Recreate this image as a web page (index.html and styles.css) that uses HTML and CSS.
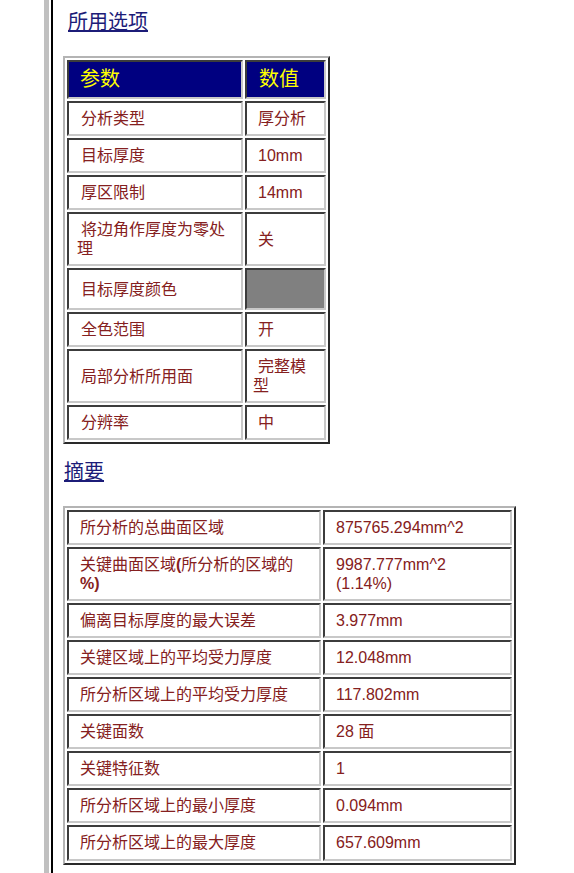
FILE: index.html
```html
<!DOCTYPE html>
<html lang="zh">
<head>
<meta charset="utf-8">
<title>厚度分析报告</title>
<link rel="stylesheet" href="styles.css">
</head>
<body>
<div class="shell">
  <div class="edge"></div>
  <main class="content">
    <h2 class="section-title title-options"><a href="#">所用选项</a></h2>
    <table class="grid options">
      <tr class="head">
        <th class="c1">参数</th>
        <th class="c2">数值</th>
      </tr>
      <tr><td class="c1">分析类型</td><td class="c2">厚分析</td></tr>
      <tr><td class="c1">目标厚度</td><td class="c2">10mm</td></tr>
      <tr><td class="c1">厚区限制</td><td class="c2">14mm</td></tr>
      <tr><td class="c1">将边角作厚度为零处理</td><td class="c2">关</td></tr>
      <tr class="color-row"><td class="c1">目标厚度颜色</td><td class="c2 swatch"></td></tr>
      <tr><td class="c1">全色范围</td><td class="c2">开</td></tr>
      <tr><td class="c1">局部分析所用面</td><td class="c2">完整模型</td></tr>
      <tr class="last"><td class="c1">分辨率</td><td class="c2">中</td></tr>
    </table>

    <h2 class="section-title title-summary"><a href="#">摘要</a></h2>
    <table class="grid summary">
      <tr><td class="c1">所分析的总曲面区域</td><td class="c2">875765.294mm^2</td></tr>
      <tr><td class="c1">关键曲面区域<b>(</b>所分析的区域的<br><b>%)</b></td><td class="c2">9987.777mm^2 (1.14%)</td></tr>
      <tr><td class="c1">偏离目标厚度的最大误差</td><td class="c2">3.977mm</td></tr>
      <tr><td class="c1">关键区域上的平均受力厚度</td><td class="c2">12.048mm</td></tr>
      <tr><td class="c1">所分析区域上的平均受力厚度</td><td class="c2">117.802mm</td></tr>
      <tr><td class="c1">关键面数</td><td class="c2">28 面</td></tr>
      <tr><td class="c1">关键特征数</td><td class="c2">1</td></tr>
      <tr><td class="c1">所分析区域上的最小厚度</td><td class="c2">0.094mm</td></tr>
      <tr class="last"><td class="c1">所分析区域上的最大厚度</td><td class="c2">657.609mm</td></tr>
    </table>
  </main>
</div>
</body>
</html>
```

FILE: styles.css
```css
html, body {
  margin: 0;
  padding: 0;
  background: #ffffff;
}

body {
  font-family: "Liberation Sans", "Noto Sans CJK SC", sans-serif;
  color: #852020;
}

.shell {
  display: flex;
  align-items: stretch;
  min-height: 873px;
}

.edge {
  flex: 0 0 auto;
  margin-left: 44px;
  width: 2px;
  border-left: 5px solid #c0c0c0;
  border-right: 2px solid #000000;
}

.content {
  flex: 1 1 auto;
  padding-left: 10px;
}

.section-title {
  font-size: 20px;
  line-height: 24px;
  font-weight: normal;
  margin: 0;
}

.section-title a {
  color: #1c1c78;
  text-decoration: underline;
}

.title-options {
  margin: 10px 0 22px 5px;
}

.title-summary {
  margin: 16px 0 22px 1px;
}

.grid {
  border-collapse: separate;
  border-spacing: 2px;
  border-style: solid;
  border-width: 2px;
  border-color: #b4b4b4 #2a2a2a #2a2a2a #b4b4b4;
  table-layout: fixed;
  font-size: 16px;
  line-height: 19px;
}

.grid td,
.grid th {
  box-sizing: border-box;
  border-style: solid;
  border-width: 2px;
  border-color: #3c3c3c #c8c8c8 #c8c8c8 #3c3c3c;
  padding: 6px 6px 6px 8px;
  vertical-align: middle;
  text-align: left;
  font-weight: normal;
}

.grid b {
  font-weight: bold;
}

/* options table */
.options {
  width: 267px;
}

.options .c1 {
  width: 176px;
  text-indent: 4px;
}

.options td.c2 {
  padding-left: 6px;
  text-indent: 5px;
}

.options .head th {
  background: #000080;
  color: #ffff00;
  font-size: 20px;
  line-height: 23px;
  padding: 6px 6px 6px 11px;
  text-indent: 0;
}

.options .head th.c2 {
  padding-left: 12px;
}

.options .color-row td {
  padding-top: 10px;
  padding-bottom: 9px;
}

.options .swatch {
  background: #808080;
}

.options .last td {
  padding-bottom: 6px;
}

/* summary table */
.summary {
  width: 453px;
}

.summary .c1 {
  width: 254px;
}

.summary td {
  padding-left: 11px;
  padding-right: 8px;
}

.summary .last td {
  padding-bottom: 7px;
}
```
